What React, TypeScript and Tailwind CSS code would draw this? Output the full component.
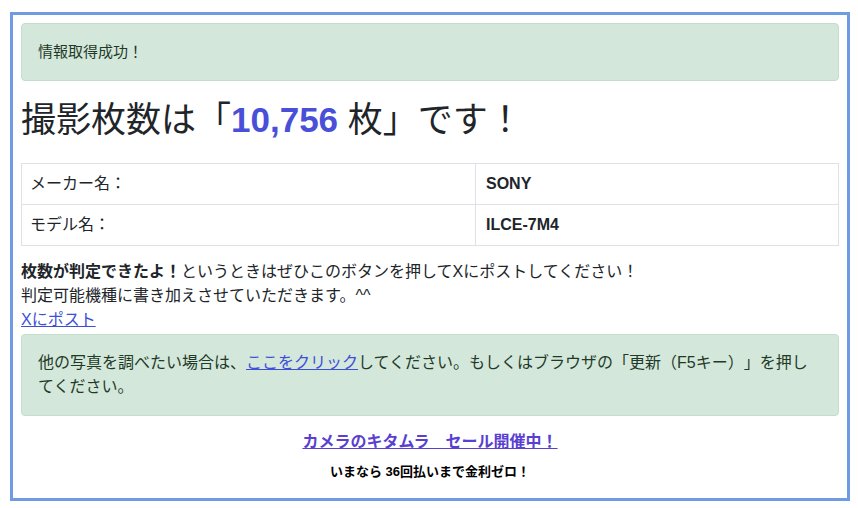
export default function App() {
  return (
    <div className="h-[508px] w-[858px] bg-white pt-3 pr-2 pl-[10px] text-[#212529]">
      <div className="font-['Liberation_Sans','Noto_Sans_CJK_JP',sans-serif] [text-spacing-trim:space-all] flex h-[489px] flex-col border-[3px] border-[#6f9be3] px-2 pt-2">
        {/* success alert */}
        <div className="rounded border border-[#c4ddcc] bg-[#d4e7db] px-4 py-4 text-[15px] leading-6 text-[#1f3a28]">
          情報取得成功！
        </div>

        <h1 className="mt-[18px] mb-[22px] text-[35px] leading-[42px] font-normal">
          撮影枚数は「
          <span className="font-bold text-[#4a4fd8]">10,756</span> 枚」です！
        </h1>

        <table className="w-full border-collapse text-base leading-6">
          <tbody>
            <tr>
              <td className="w-[454px] border border-[#dee2e6] px-2 py-2">
                メーカー名：
              </td>
              <td className="border border-[#dee2e6] px-2.5 py-2 font-bold">
                SONY
              </td>
            </tr>
            <tr>
              <td className="border border-[#dee2e6] px-2 py-2">
                モデル名：
              </td>
              <td className="border border-[#dee2e6] px-2.5 py-2 font-bold">
                ILCE-7M4
              </td>
            </tr>
          </tbody>
        </table>

        <div className="mt-[14px] text-base leading-6">
          <p>
            <b>枚数が判定できたよ！</b>というときはぜひこのボタンを押してXにポストしてください！
          </p>
          <p>判定可能機種に書き加えさせていただきます。^^</p>
          <a href="#" className="text-[#3d4fd9] underline">
            Xにポスト
          </a>
        </div>

        {/* reload alert */}
        <div className="mt-0.5 rounded border border-[#c4ddcc] bg-[#d4e7db] px-4 py-4 text-base leading-6 text-[#1f3a28]">
          他の写真を調べたい場合は、
          <a href="#" className="text-[#3d4fd9] underline">
            ここをクリック
          </a>
          してください。もしくはブラウザの「更新（F5キー）」を押してください。
        </div>

        <div className="mt-[14px] text-center">
          <a
            href="#"
            className="text-base leading-6 font-bold text-[#5a3fd0] underline"
          >
            カメラのキタムラ　セール開催中！
          </a>
          <p className="mt-2 text-[13px] leading-5 font-bold text-black">
            いまなら 36回払いまで金利ゼロ！
          </p>
        </div>
      </div>
    </div>
  )
}
